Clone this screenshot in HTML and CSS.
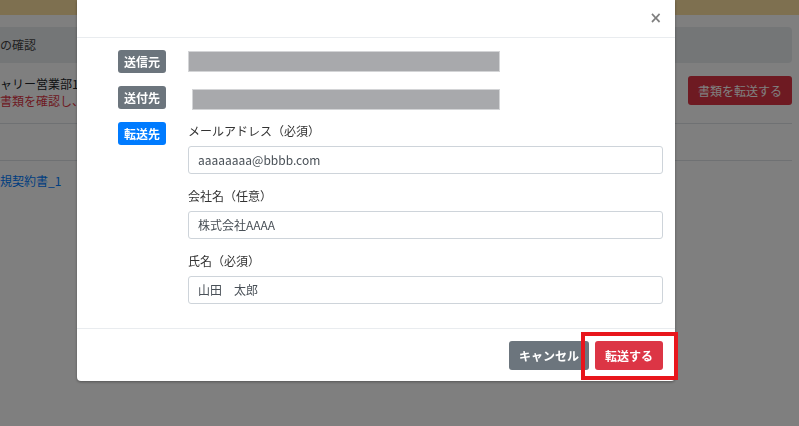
FILE: index.html
```html
<!DOCTYPE html>
<html lang="ja">
<head>
<meta charset="utf-8">
<title>書類の転送</title>
<link rel="stylesheet" href="styles.css">
</head>
<body>
<div class="page">
  <div class="notice-band"></div>
  <div class="card-head">の確認</div>
  <div class="doc-row">
    <div class="doc-info">
      <div class="doc-dept">ャリー営業部1</div>
      <div class="doc-warn">書類を確認し、</div>
    </div>
    <button class="page-btn">書類を転送する</button>
  </div>
  <div class="rule"></div>
  <div class="rule-gap"></div>
  <div class="doc-link">規契約書_1</div>
</div>

<div class="backdrop"></div>

<div class="modal">
  <div class="modal-header">
    <span class="close">×</span>
  </div>
  <div class="modal-body">
    <div class="row row-a">
      <div class="badge-col"><span class="badge badge-gray">送信元</span></div>
      <div class="bar bar-a"></div>
    </div>
    <div class="row row-b">
      <div class="badge-col"><span class="badge badge-gray">送付先</span></div>
      <div class="bar bar-b"></div>
    </div>
    <div class="row">
      <div class="badge-col"><span class="badge badge-blue">転送先</span></div>
      <div class="form-col">
        <div class="group">
          <label class="label">メールアドレス（必須）</label>
          <div class="input">aaaaaaaa@bbbb.com</div>
        </div>
        <div class="group">
          <label class="label">会社名（任意）</label>
          <div class="input">株式会社AAAA</div>
        </div>
        <div class="group">
          <label class="label">氏名（必須）</label>
          <div class="input">山田　太郎</div>
        </div>
      </div>
    </div>
  </div>
  <div class="modal-footer">
    <button class="btn btn-cancel">キャンセル</button>
    <button class="btn btn-submit">転送する</button>
  </div>
</div>

<div class="highlight"></div>
</body>
</html>
```

FILE: styles.css
```css
* { box-sizing: border-box; }
html, body {
  margin: 0;
  padding: 0;
  width: 799px;
  height: 426px;
  overflow: hidden;
  background: #ffffff;
  font-family: "Noto Sans CJK JP", "Noto Sans", sans-serif;
  color: #212529;
}

/* background page */
.page {
  display: flex;
  flex-direction: column;
  width: 799px;
}
.notice-band {
  height: 15px;
  background: #fde0a0;
}
.card-head {
  margin: 12px 7px 0 0;
  height: 36px;
  background: #e9ecef;
  border-radius: 0 4px 4px 0;
  font-size: 12px;
  line-height: 36px;
  color: #444;
}
.doc-row {
  display: flex;
  justify-content: space-between;
  align-items: flex-start;
  margin-right: 7px;
  height: 60px;
  padding-top: 12px;
}
.doc-info {
  font-size: 12px;
  line-height: 17px;
}
.doc-dept { color: #212529; }
.doc-warn { color: #dc3545; }
.page-btn {
  margin-top: 1px;
  width: 104px;
  height: 29px;
  border: none;
  border-radius: 3px;
  background: #dc3545;
  color: #ffffff;
  font-family: inherit;
  font-size: 12px;
  padding: 0;
}
.rule {
  margin-right: 7px;
  height: 1px;
  background: #dee2e6;
}
.rule-gap {
  margin-right: 7px;
  height: 37px;
  border-bottom: 1px solid #dee2e6;
}
.doc-link {
  margin-top: 11px;
  font-size: 12px;
  line-height: 18px;
  color: #007bff;
}

.backdrop {
  position: fixed;
  inset: 0;
  background: rgba(0, 0, 0, 0.5);
}

/* modal */
.modal {
  position: fixed;
  left: 77px;
  top: 0;
  width: 598px;
  background: #ffffff;
  border-radius: 0 0 4px 4px;
  box-shadow: 0 1px 3px rgba(0, 0, 0, 0.35);
}
.modal-header {
  height: 38px;
  border-bottom: 1px solid #e9ecef;
  display: flex;
  justify-content: flex-end;
  align-items: center;
  padding-right: 13px;
}
.close {
  font-family: "DejaVu Sans", sans-serif;
  font-size: 15px;
  font-weight: 700;
  color: #000;
  opacity: 0.5;
  line-height: 1;
  margin-top: -1px;
}
.modal-body {
  padding: 12px 12px 24px 41px;
}
.row {
  display: flex;
  align-items: flex-start;
}
.row-a { margin-bottom: 13px; }
.row-b { margin-bottom: 12px; }
.badge-col {
  flex: 0 0 70px;
  display: flex;
  align-items: flex-start;
}
.badge {
  display: block;
  height: 23px;
  padding: 0 6px;
  font-size: 12px;
  font-weight: 700;
  line-height: 23px;
  color: #ffffff;
  border-radius: 3px;
}
.badge-gray { background: #6c757d; }
.badge-blue { background: #007bff; }
.bar {
  height: 21px;
  background: #a8a9ac;
  border: 1px solid #d3d4d6;
}
.bar-a {
  margin-top: 1px;
  width: 312px;
}
.bar-b {
  margin-top: 3px;
  margin-left: 4px;
  width: 308px;
}
.form-col {
  flex: 1;
  display: flex;
  flex-direction: column;
  gap: 13px;
}
.group {
  display: flex;
  flex-direction: column;
}
.label {
  font-size: 12px;
  line-height: 18px;
  margin-bottom: 6px;
  color: #333;
}
.input {
  height: 28px;
  border: 1px solid #ced4da;
  border-radius: 3px;
  padding: 0 9px;
  font-size: 12px;
  line-height: 26px;
  color: #495057;
}
.modal-footer {
  border-top: 1px solid #e9ecef;
  padding: 12px 12px 11px;
  display: flex;
  justify-content: flex-end;
  gap: 6px;
}
.btn {
  height: 29px;
  padding: 0 10px;
  border: none;
  border-radius: 3px;
  font-family: inherit;
  font-size: 12px;
  font-weight: 700;
  color: #ffffff;
}
.btn-cancel { background: #6c757d; }
.btn-submit { background: #dc3545; }

/* annotation */
.highlight {
  position: fixed;
  left: 581px;
  top: 332px;
  width: 97px;
  height: 48px;
  border: 4px solid #e8161c;
}
```
